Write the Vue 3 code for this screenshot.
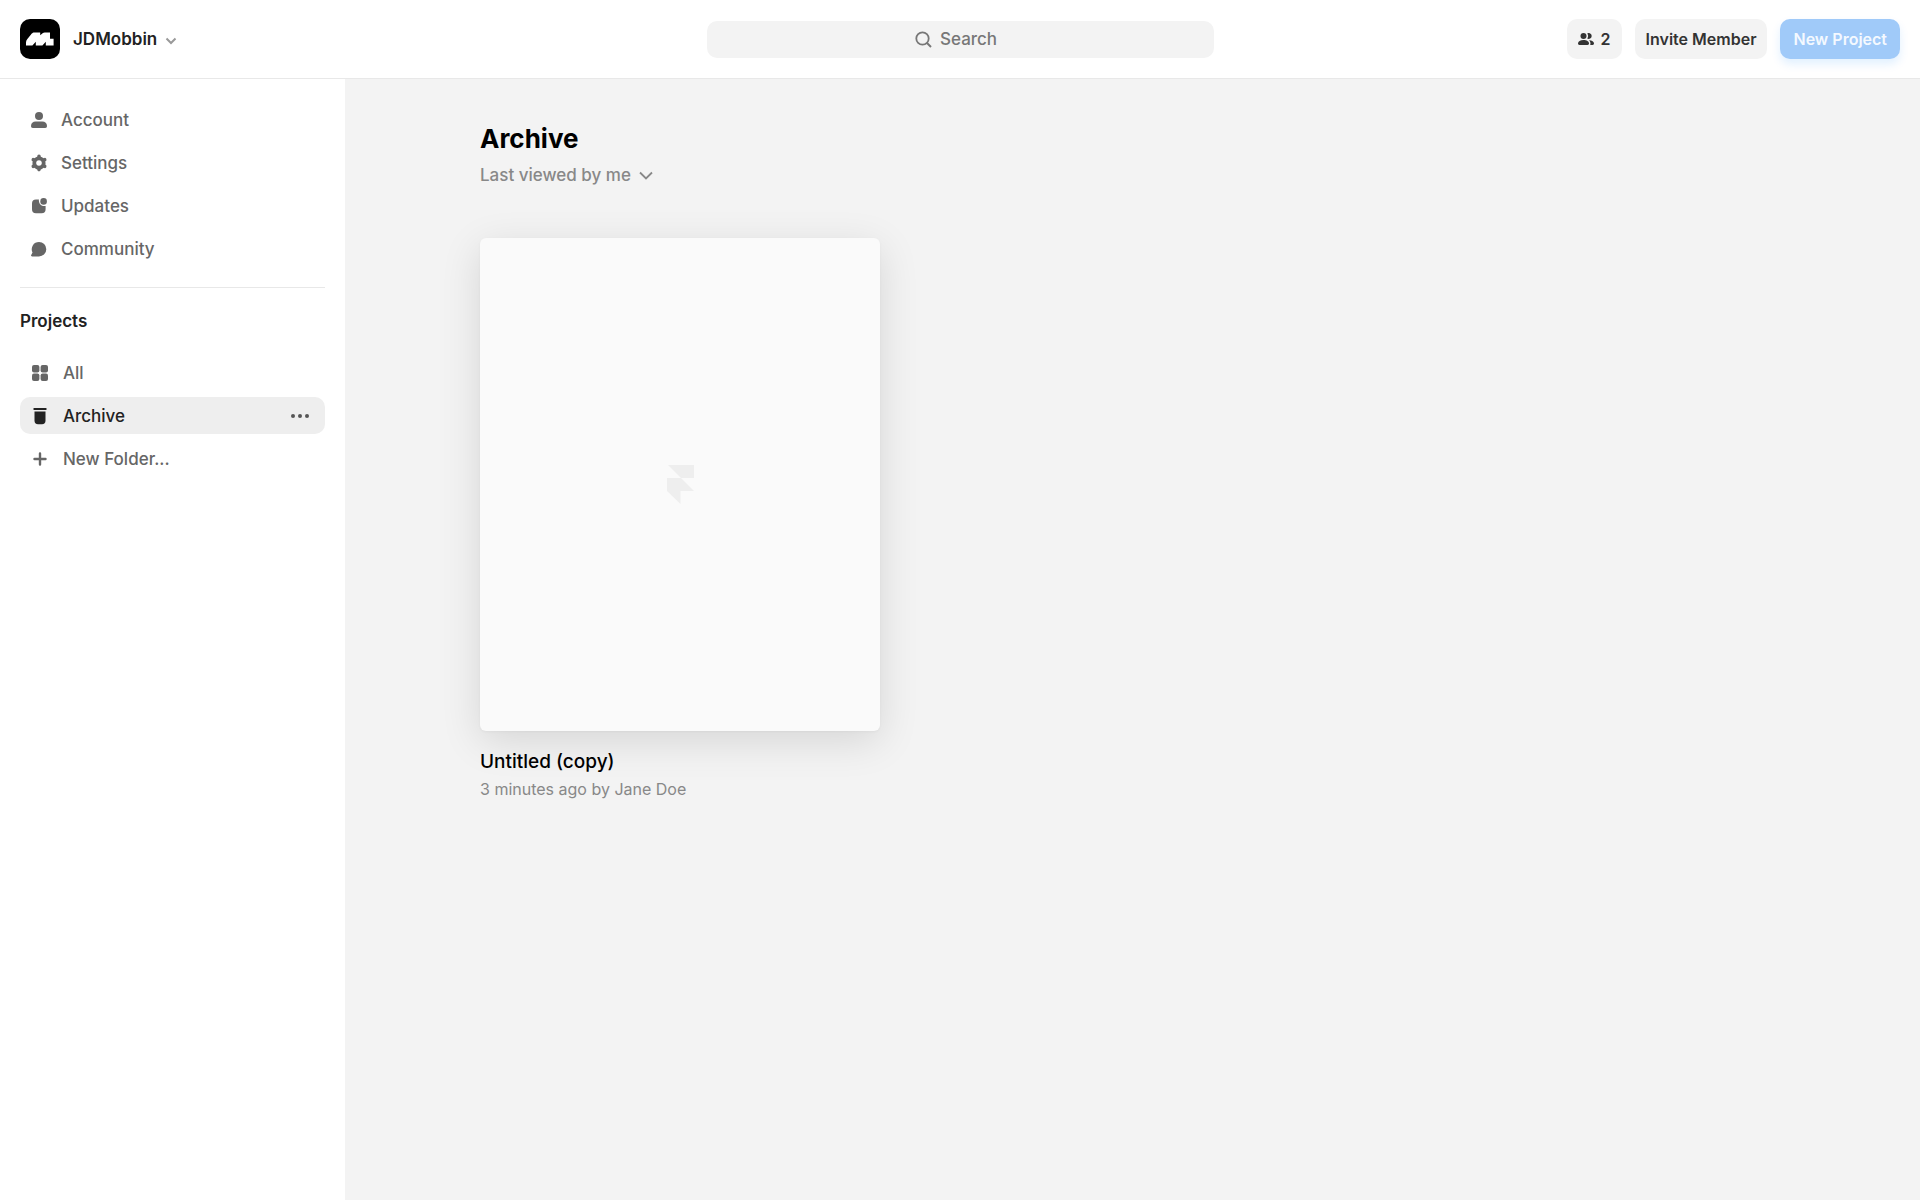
<script setup>
import { ref } from 'vue'

const activeFolder = ref('Archive')
const search = ref('')

const links = [
  { name: 'Account', icon: 'account' },
  { name: 'Settings', icon: 'settings' },
  { name: 'Updates', icon: 'updates' },
  { name: 'Community', icon: 'community' }
]

const folders = [
  { name: 'All', icon: 'all' },
  { name: 'Archive', icon: 'archive' }
]

const projects = [
  { id: 1, title: 'Untitled (copy)', meta: '3 minutes ago by Jane Doe' }
]
</script>

<template>
  <div class="page">
    <header class="topbar">
      <button class="team">
        <svg class="logo" width="40" height="40" viewBox="0 0 40 40">
          <rect width="40" height="40" rx="10" fill="#000" />
          <path d="M6 26.500V23.500C6 22.300 6.400 21.300 7.200 20.200L11.800 14.600C12.500 13.800 13.200 13.400 14.300 13.400H20.200V16.200L22.600 14.200C23.200 13.600 23.800 13.400 24.800 13.400H30V19.800H33.600V26.500H25.800V22.800L22.400 26.500H15.800V22.800L12.400 26.500Z" fill="#fff" />
        </svg>
        <span>JDMobbin</span>
        <svg class="caret" width="12" height="8" viewBox="0 0 12 8">
          <path d="M1.500 1.500L6 6L10.500 1.500" fill="none" stroke="#999" stroke-width="2" />
        </svg>
      </button>

      <label class="search">
        <svg width="17" height="17" viewBox="0 0 17 17">
          <circle cx="7.500" cy="7.500" r="6.200" fill="none" stroke="#777" stroke-width="1.800" />
          <path d="M12 12L16 16" stroke="#777" stroke-width="2" />
        </svg>
        <input v-model="search" type="text" placeholder="Search" aria-label="Search" />
      </label>

      <div class="actions">
        <button class="btn members">
          <svg width="16" height="12" viewBox="0 0 16 12">
            <circle cx="5.500" cy="3" r="3" fill="#333" />
            <path d="M0 10.600C0 8.400 2.300 7 5.500 7S11 8.400 11 10.600C11 11.500 10.500 12 9.600 12H1.400C0.500 12 0 11.500 0 10.600Z" fill="#333" />
            <path d="M9.200 0.400A3 3 0 1 1 9.200 5.600A4.400 4.400 0 0 0 9.200 0.400Z" fill="#333" />
            <path d="M11 7.200C14 7.200 16 8.600 16 10.600C16 11.500 15.500 12 14.600 12H12.200C12.800 10.400 12.400 8.600 11 7.200Z" fill="#333" />
          </svg>
          2
        </button>
        <button class="btn">Invite Member</button>
        <button class="btn primary">New Project</button>
      </div>
    </header>

    <div class="body">
      <aside class="sidebar">
        <nav class="list">
          <a v-for="link in links" :key="link.name" href="#" class="item">
            <svg width="18" height="18" viewBox="0 0 18 18" fill="currentColor">
              <template v-if="link.icon === 'account'">
                <circle cx="9" cy="5" r="4" />
                <path d="M1 15C1 12.400 3 10.600 5.600 10.600H12.400C15 10.600 17 12.400 17 15C17 16.300 16.400 17 15.200 17H2.800C1.600 17 1 16.300 1 15Z" />
              </template>
              <g v-else-if="link.icon === 'settings'" fill="none" stroke="currentColor" stroke-linecap="round">
                <circle cx="9" cy="9" r="4.700" stroke-width="3.800" />
                <path
                  d="M9 4V2.400M9 14V15.600M13.330 6.500L14.700 5.700M4.670 6.500L3.300 5.700M13.330 11.500L14.700 12.300M4.670 11.500L3.300 12.300"
                  stroke-width="3.600"
                />
              </g>
              <template v-else-if="link.icon === 'updates'">
                <path d="M6 2.400H8.900C8.500 6.400 11 9.400 15.600 9V12.200C15.600 14.800 14.300 16.200 11.600 16.200H6C3.300 16.200 2 14.800 2 12.200V6.400C2 3.800 3.300 2.400 6 2.400Z" />
                <circle cx="13.600" cy="4.400" r="3.300" />
              </template>
              <path v-else d="M9 1.900A7.300 7.300 0 1 1 9 16.500H2.200C1.200 16.500 0.800 15.800 1.200 15L2.500 12.500A7.300 7.300 0 0 1 9 1.900Z" />
            </svg>
            {{ link.name }}
          </a>
        </nav>

        <hr />

        <h2>Projects</h2>

        <nav class="list folders">
          <div
            v-for="folder in folders"
            :key="folder.name"
            class="item"
            :class="{ active: activeFolder === folder.name }"
          >
            <a href="#" @click.prevent="activeFolder = folder.name">
              <svg width="18" height="18" viewBox="0 0 18 18" fill="currentColor">
                <template v-if="folder.icon === 'all'">
                  <rect x="1" y="1" width="7.400" height="7.400" rx="2" />
                  <rect x="9.600" y="1" width="7.400" height="7.400" rx="2" />
                  <rect x="1" y="9.600" width="7.400" height="7.400" rx="2" />
                  <rect x="9.600" y="9.600" width="7.400" height="7.400" rx="2" />
                </template>
                <template v-else>
                  <rect x="2.500" y="1" width="13" height="2" rx="0.500" />
                  <path d="M3.500 4.400H14.500V13.500C14.500 16 13.300 17.200 11 17.200H7C4.700 17.200 3.500 16 3.500 13.500Z" />
                </template>
              </svg>
              {{ folder.name }}
            </a>
            <button v-if="activeFolder === folder.name" class="more" aria-label="More">
              <svg width="18" height="4" viewBox="0 0 18 4" fill="#555">
                <circle cx="2" cy="2" r="2" />
                <circle cx="9" cy="2" r="2" />
                <circle cx="16" cy="2" r="2" />
              </svg>
            </button>
          </div>
          <button class="item">
            <svg width="18" height="18" viewBox="0 0 18 18">
              <path d="M9 3.500V14.500M3.500 9H14.500" stroke="currentColor" stroke-width="2.400" stroke-linecap="round" />
            </svg>
            New Folder...
          </button>
        </nav>
      </aside>

      <main>
        <h1>{{ activeFolder }}</h1>
        <button class="sort">
          Last viewed by me
          <svg width="14" height="9" viewBox="0 0 14 9">
            <path d="M1 1.500L7 7.500L13 1.500" fill="none" stroke="#888" stroke-width="1.800" />
          </svg>
        </button>

        <div class="grid">
          <article v-for="project in projects" :key="project.id" class="project">
            <a href="#" class="thumb" :aria-label="project.title">
              <svg width="27" height="39" viewBox="0 0 27 39" fill="#eee">
                <path d="M1 0H27V13H14Z" />
                <path d="M0 13H14L27 26H13.500V39L0 26Z" />
              </svg>
            </a>
            <h3>{{ project.title }}</h3>
            <p>{{ project.meta }}</p>
          </article>
        </div>
      </main>
    </div>
  </div>
</template>

<style>
body {
  background: #f3f3f3;
}
</style>

<style scoped>
.page {
  min-height: 100vh;
  display: flex;
  flex-direction: column;
  font-family: Inter, "Liberation Sans", sans-serif;
  font-size: 17px;
  font-weight: 500;
  color: #222;
}

button {
  border: none;
  padding: 0;
  background: none;
  font: inherit;
  color: inherit;
  cursor: pointer;
}

a {
  color: inherit;
  text-decoration: none;
}

.topbar {
  display: grid;
  grid-template-columns: 1fr minmax(200px, 507px) 1fr;
  align-items: center;
  padding: 19px 20px;
  background: #fff;
  border-bottom: 1px solid #e8e8e8;
}

.team {
  display: flex;
  align-items: center;
  justify-self: start;
  font-weight: 600;
}

.logo {
  margin-right: 13px;
}

.caret {
  margin: 3px 0 0 8px;
}

.search {
  display: flex;
  align-items: center;
  justify-content: center;
  gap: 8px;
  height: 37px;
  border-radius: 10px;
  background: #f3f3f3;
}

.search input {
  width: 65px;
  border: none;
  outline: none;
  padding: 0;
  background: none;
  font: inherit;
  color: #777;
}

.search input::placeholder {
  color: #777;
  opacity: 1;
}

.actions {
  display: flex;
  justify-content: flex-end;
  gap: 13px;
}

.btn {
  height: 40px;
  padding: 0 11px;
  border-radius: 10px;
  background: #f3f3f3;
  font-size: 16px;
  font-weight: 600;
  color: #333;
  white-space: nowrap;
}

.members {
  display: flex;
  align-items: center;
  gap: 7px;
}

.primary {
  padding: 0 13px;
  background: #a0caf9;
  color: #f4f9ff;
  box-shadow: 0 5px 10px rgba(0, 130, 255, 0.12);
}

.body {
  flex: 1;
  display: flex;
}

.sidebar {
  flex: none;
  width: 305px;
  padding: 22px 20px;
  background: #fff;
}

.list {
  display: flex;
  flex-direction: column;
  gap: 6px;
}

.item {
  display: flex;
  align-items: center;
  gap: 13px;
  height: 37px;
  padding: 0 10px;
  border-radius: 10px;
  color: #666;
}

.item a {
  flex: 1;
  display: flex;
  align-items: center;
  gap: 14px;
}

.folders .item {
  gap: 14px;
  padding: 0 16px 0 11px;
}

.folders .active {
  background: #eee;
  color: #222;
}

.more {
  display: flex;
  padding: 8px 0;
}

hr {
  margin: 20px 0 22px;
  border: none;
  border-top: 1px solid #e8e8e8;
}

h2 {
  margin: 0 0 22px;
  font-size: 17px;
  line-height: 22px;
  font-weight: 600;
}

main {
  flex: 1;
  padding: 42px 135px;
  background: #f3f3f3;
}

h1 {
  margin: 0 0 3px;
  font-size: 26px;
  line-height: 36px;
  font-weight: 700;
  color: #000;
}

.sort {
  display: flex;
  align-items: center;
  gap: 8px;
  margin-bottom: 48px;
  line-height: 30px;
  color: #888;
}

.grid {
  display: grid;
  grid-template-columns: repeat(auto-fill, 400px);
  gap: 40px;
}

.thumb {
  display: flex;
  align-items: center;
  justify-content: center;
  aspect-ratio: 400 / 493;
  border-radius: 6px;
  background: #fafafa;
  box-shadow: 0 10px 40px rgba(0, 0, 0, 0.12), 0 1px 3px rgba(0, 0, 0, 0.04);
}

h3 {
  margin: 18px 0 0;
  font-size: 19px;
  line-height: 26px;
  font-weight: 500;
  color: #000;
}

p {
  margin: 2px 0 0;
  font-size: 16px;
  font-weight: 400;
  line-height: 24px;
  color: #888;
}
</style>
